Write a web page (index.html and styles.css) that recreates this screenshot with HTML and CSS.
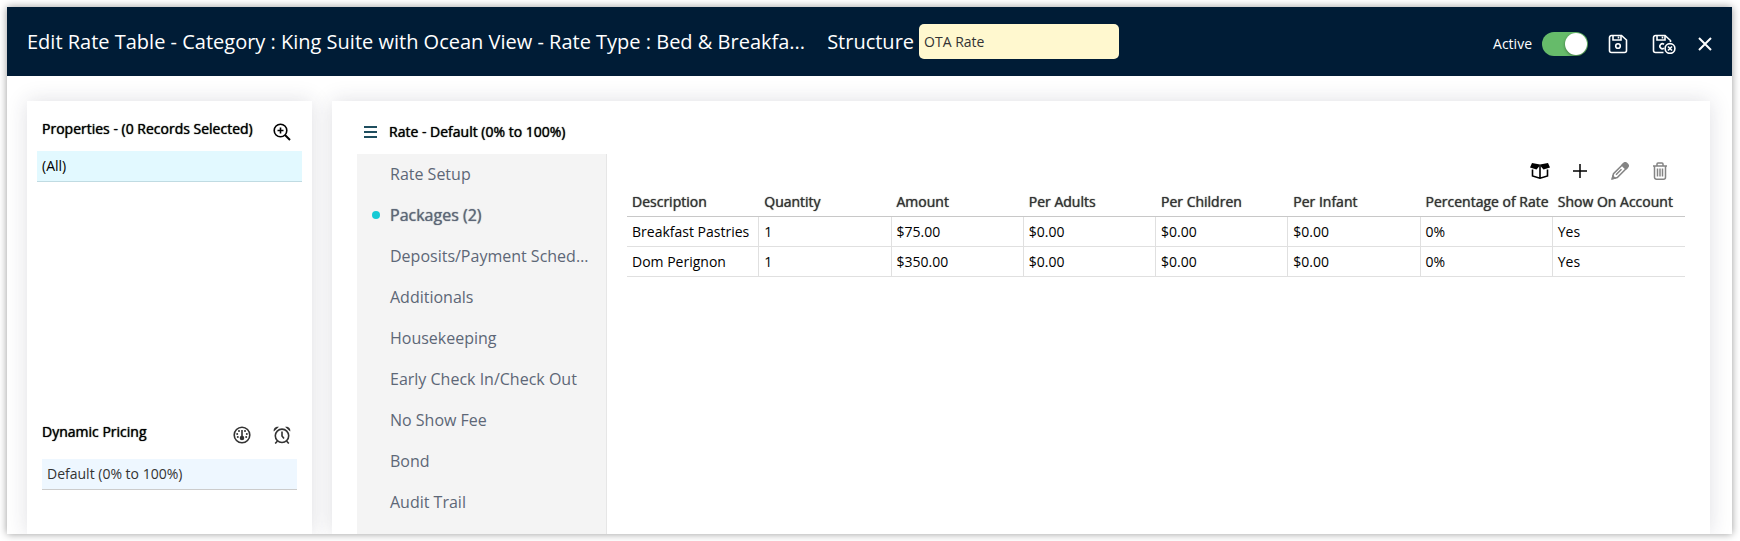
FILE: index.html
```
<!DOCTYPE html>
<html lang="en">
<head>
    <meta charset="UTF-8">
    <meta name="viewport" content="width=device-width, initial-scale=1.0">
    <title>Edit Rate Table</title>
    <link rel="stylesheet" href="styles.css">
</head>
<body>
    <div class="modal">
        <header class="modal-header">
            <h1 class="modal-title">Edit Rate Table - Category : King Suite with Ocean View - Rate Type : Bed &amp; Breakfa...</h1>
            <label class="structure-label" for="structure">Structure</label>
            <input type="text" id="structure" class="structure-input" value="OTA Rate">
            <div class="header-actions">
                <label class="active-label" for="active">Active</label>
                <input type="checkbox" id="active" class="toggle" checked>
                <button class="icon-btn save-btn" aria-label="Save">
                    <svg width="20" height="20" viewBox="0 0 20 20" fill="none" stroke="#fff" stroke-width="1.6">
                        <path d="M3.5 1.5h10l5 4.5v10.5a2 2 0 0 1-2 2h-13a2 2 0 0 1-2-2v-13a2 2 0 0 1 2-2z"/>
                        <path d="M5 1.5v4.5h8v-4.5M10.500 2.500v2"/>
                        <circle cx="10" cy="12" r="2.300"/>
                    </svg>
                </button>
                <button class="icon-btn save-close-btn" aria-label="Save and close">
                    <svg width="24" height="20" viewBox="0 0 24 20" fill="none" stroke="#fff" stroke-width="1.6">
                        <path d="M11.500 18.500h-8a2 2 0 0 1-2-2v-13a2 2 0 0 1 2-2h9.500l5.500 5v1.500"/>
                        <path d="M5 1.500v4.500h8v-4.500M10.500 2.500v2"/>
                        <path d="M12 10.300a2.500 2.500 0 1 0 0 3.800"/>
                        <circle cx="18" cy="14.500" r="4.900"/>
                        <path d="M16 12.500l4 4M20 12.500l-4 4"/>
                    </svg>
                </button>
                <button class="icon-btn close-btn" aria-label="Close">
                    <svg width="14" height="14" viewBox="0 0 14 14" stroke="#fff" stroke-width="2">
                        <path d="M1 1l12 12M13 1L1 13"/>
                    </svg>
                </button>
            </div>
        </header>

        <div class="modal-body">
            <aside class="card side-card">
                <section class="properties">
                    <div class="section-head">
                        <h2 class="heading">Properties - (0 Records Selected)</h2>
                        <button class="icon-btn" aria-label="Search properties">
                            <svg width="18" height="18" viewBox="0 0 18 18" fill="none" stroke="#000" stroke-width="1.6">
                                <circle cx="7.500" cy="7.500" r="6.300"/>
                                <path d="M12 12l5 5" stroke-width="2"/>
                                <path d="M7.500 4.500v6M4.500 7.500h6"/>
                            </svg>
                        </button>
                    </div>
                    <div class="property-row">(All)</div>
                </section>
                <section class="pricing">
                    <div class="section-head">
                        <h2 class="heading">Dynamic Pricing</h2>
                        <div class="pricing-icons">
                            <button class="icon-btn" aria-label="Occupancy pricing">
                                <svg width="18" height="18" viewBox="0 0 18 18" fill="none" stroke="#333" stroke-width="1.6">
                                    <circle cx="9" cy="9" r="7.800"/>
                                    <path d="M9 4v7"/>
                                    <circle cx="9" cy="12" r="1.500" fill="#333"/>
                                    <g fill="#333" stroke="none">
                                        <circle cx="6" cy="5" r="1"/>
                                        <circle cx="12" cy="5" r="1"/>
                                        <circle cx="4.200" cy="8" r="1"/>
                                        <circle cx="13.800" cy="8" r="1"/>
                                        <circle cx="4.800" cy="11" r="1"/>
                                        <circle cx="13.200" cy="11" r="1"/>
                                    </g>
                                </svg>
                            </button>
                            <button class="icon-btn" aria-label="Timed pricing">
                                <svg width="18" height="18" viewBox="0 0 18 18" fill="none" stroke="#333" stroke-width="1.6">
                                    <circle cx="9" cy="9.800" r="6.700"/>
                                    <path d="M9 5.500v4.500l2 2.500M4.500 15l-2.300 2.500M13.500 15l2.300 2.500"/>
                                    <path d="M.8 5.600C0 2.500 2.500 0 6 .8zM17.200 5.600C18 2.500 15.500 0 12 .8z" fill="#333" stroke="none"/>
                                </svg>
                            </button>
                        </div>
                    </div>
                    <div class="pricing-row">Default (0% to 100%)</div>
                </section>
            </aside>

            <main class="card main-card">
                <div class="rate-head">
                    <button class="icon-btn" aria-label="Toggle menu">
                        <svg width="13" height="12" viewBox="0 0 13 12" stroke="#1f4e5f" stroke-width="2">
                            <path d="M0 1h13M0 6h13M0 11h13"/>
                        </svg>
                    </button>
                    <h2 class="heading">Rate - Default (0% to 100%)</h2>
                </div>
                <div class="rate-body">
                    <nav class="rate-nav">
                        <a href="#" class="nav-item">Rate Setup</a>
                        <a href="#" class="nav-item selected">Packages (2)</a>
                        <a href="#" class="nav-item">Deposits/Payment Schedule</a>
                        <a href="#" class="nav-item">Additionals</a>
                        <a href="#" class="nav-item">Housekeeping</a>
                        <a href="#" class="nav-item">Early Check In/Check Out</a>
                        <a href="#" class="nav-item">No Show Fee</a>
                        <a href="#" class="nav-item">Bond</a>
                        <a href="#" class="nav-item">Audit Trail</a>
                    </nav>
                    <div class="packages">
                        <div class="toolbar">
                            <button class="icon-btn" aria-label="Packages">
                                <svg width="20" height="16" viewBox="0 0 20 16">
                                    <path d="M2 0L10 1.500 18 0 20 4.500 13.500 6.500 10 2.500 6.500 6.500 0 4.500z"/>
                                    <path d="M2.500 6.500v6.500l7.500 2.200 7.500-2.200V6.500M10 3v12" fill="none" stroke="#000" stroke-width="1.600"/>
                                </svg>
                            </button>
                            <button class="icon-btn" aria-label="Add">
                                <svg width="14" height="14" viewBox="0 0 14 14" stroke="#000" stroke-width="1.500">
                                    <path d="M0 7h14M7 0v14"/>
                                </svg>
                            </button>
                            <button class="icon-btn" aria-label="Edit">
                                <svg width="18" height="18" viewBox="0 0 18 18" fill="none" stroke="#848484" stroke-width="1.500">
                                    <path d="M1.300 16.700l1.200-5L12 2.200l3.800 3.800-9.500 9.500z"/>
                                    <path d="M11 3.200l1.800-1.800a2 2 0 0 1 2.800 0l1 1a2 2 0 0 1 0 2.800L14.800 7z" fill="#848484"/>
                                    <path d="M1.300 16.700l.6-2.500 1.900 1.900zM5 12.800l5.500-5.500" fill="#848484"/>
                                </svg>
                            </button>
                            <button class="icon-btn" aria-label="Delete">
                                <svg width="16" height="18" viewBox="0 0 16 18" fill="none" stroke="#848484" stroke-width="1.500">
                                    <path d="M1 4h14M5 4V2a1 1 0 0 1 1-1h4a1 1 0 0 1 1 1v2M2.500 4v11.200a2 2 0 0 0 2 2h7a2 2 0 0 0 2-2V4M5.500 6.500v8M8 6.500v8M10.500 6.500v8"/>
                                </svg>
                            </button>
                        </div>
                        <table class="package-table">
                            <thead>
                                <tr>
                                    <th>Description</th>
                                    <th>Quantity</th>
                                    <th>Amount</th>
                                    <th>Per Adults</th>
                                    <th>Per Children</th>
                                    <th>Per Infant</th>
                                    <th>Percentage of Rate</th>
                                    <th>Show On Account</th>
                                </tr>
                            </thead>
                            <tbody>
                                <tr>
                                    <td>Breakfast Pastries</td>
                                    <td>1</td>
                                    <td>$75.00</td>
                                    <td>$0.00</td>
                                    <td>$0.00</td>
                                    <td>$0.00</td>
                                    <td>0%</td>
                                    <td>Yes</td>
                                </tr>
                                <tr>
                                    <td>Dom Perignon</td>
                                    <td>1</td>
                                    <td>$350.00</td>
                                    <td>$0.00</td>
                                    <td>$0.00</td>
                                    <td>$0.00</td>
                                    <td>0%</td>
                                    <td>Yes</td>
                                </tr>
                            </tbody>
                        </table>
                    </div>
                </div>
            </main>
        </div>
    </div>
</body>
</html>
```
FILE: styles.css
```
* {
    box-sizing: border-box;
}

body {
    margin: 0;
    padding: 7px 8px 7px 7px;
    height: 100vh;
    display: flex;
    background-color: #fff;
    font-family: "Open Sans", sans-serif;
    font-size: 14px;
    line-height: 20px;
    color: #000;
}

.modal {
    flex: 1;
    min-width: 0;
    display: flex;
    flex-direction: column;
    overflow: hidden;
    background-color: #fff;
    box-shadow: 0 0 8px rgba(0, 0, 0, 0.4);
}

/* Header */
.modal-header {
    display: flex;
    align-items: center;
    flex-shrink: 0;
    height: 69px;
    padding: 0 20px;
    background-color: #001c36;
    color: #fff;
}

.modal-title {
    min-width: 0;
    margin: 0;
    font-size: 20px;
    font-weight: 400;
    line-height: 28px;
    white-space: nowrap;
    overflow: hidden;
    text-overflow: ellipsis;
}

.structure-label {
    margin-left: 22px;
    font-size: 20px;
    line-height: 28px;
}

.structure-input {
    width: 200px;
    height: 35px;
    margin-left: 5px;
    padding: 0 5px;
    border: none;
    border-radius: 5px;
    background-color: #fff8cf;
    color: #333;
    font: inherit;
}

.header-actions {
    display: flex;
    align-items: center;
    margin-left: auto;
    padding-top: 5px;
}

.active-label {
    margin-right: 10px;
}

.toggle {
    appearance: none;
    width: 46px;
    height: 24px;
    margin: 0;
    padding: 1px;
    border-radius: 12px;
    background-color: #9aa3ab;
    display: flex;
    cursor: pointer;
}

.toggle::before {
    content: "";
    width: 22px;
    height: 22px;
    border-radius: 50%;
    background-color: #fff;
    box-shadow: 0 1px 3px rgba(0, 0, 0, 0.4);
}

.toggle:checked {
    background-color: #66bb6a;
    justify-content: flex-end;
}

.icon-btn {
    display: flex;
    padding: 0;
    border: none;
    background: none;
    cursor: pointer;
}

.save-btn {
    margin-left: 20px;
}

.save-close-btn {
    margin-left: 24px;
}

.close-btn {
    margin-left: 22px;
}

/* Body */
.modal-body {
    flex: 1;
    min-height: 0;
    display: flex;
    gap: 20px;
    padding: 25px 22px 0 20px;
}

.card {
    background-color: #fff;
    box-shadow: 0 0 20px rgba(40, 40, 70, 0.15);
}

.heading {
    margin: 0;
    font-size: 14px;
    font-weight: 400;
    line-height: 20px;
    text-shadow: 0 0 1px currentColor;
}

.side-card {
    width: 285px;
    flex-shrink: 0;
    display: flex;
    flex-direction: column;
    padding: 18px 10px 0;
}

.properties {
    flex: 1;
}

.section-head {
    display: flex;
    justify-content: space-between;
    height: 21px;
    padding: 0 11px 0 5px;
}

.section-head .icon-btn {
    padding-top: 4px;
}

.property-row {
    margin-top: 11px;
    padding: 5px;
    border-bottom: 1px solid #c0dbe2;
    background-color: #e2f9ff;
}

.pricing {
    height: 112px;
}

.pricing-icons {
    display: flex;
    gap: 22px;
}

.pricing-row {
    margin: 16px 5px 0;
    padding: 5px;
    border-bottom: 1px solid #ccc;
    background-color: #eef7ff;
    color: #333;
}

.main-card {
    flex: 1;
    min-width: 0;
    display: flex;
    flex-direction: column;
    padding: 21px 25px 0;
}

.rate-head {
    display: flex;
    align-items: center;
    gap: 12px;
    padding-left: 7px;
}

.rate-body {
    flex: 1;
    display: flex;
    gap: 20px;
    margin-top: 12px;
}

.rate-nav {
    width: 250px;
    flex-shrink: 0;
    border-right: 1px solid #e6e6e6;
    background-color: #f4f4f4;
}

.nav-item {
    display: block;
    position: relative;
    padding: 0 16px 0 33px;
    font-size: 16px;
    line-height: 41px;
    color: #5d6777;
    text-decoration: none;
    white-space: nowrap;
    overflow: hidden;
    text-overflow: ellipsis;
}

.nav-item.selected {
    text-shadow: 0 0 1px currentColor;
}

.nav-item.selected::before {
    content: "";
    position: absolute;
    left: 15px;
    top: 16px;
    width: 8px;
    height: 8px;
    border-radius: 50%;
    background-color: #16cad5;
}

/* Packages grid */
.packages {
    flex: 1;
    min-width: 0;
}

.toolbar {
    display: flex;
    align-items: center;
    justify-content: flex-end;
    gap: 20px;
    height: 33px;
    padding-right: 15px;
}

.toolbar .icon-btn {
    width: 20px;
    justify-content: center;
}

.package-table {
    width: 100%;
    table-layout: fixed;
    border-collapse: separate;
    border-spacing: 0;
}

.package-table th,
.package-table td {
    height: 30px;
    padding: 0 0 0 5px;
    text-align: left;
    white-space: nowrap;
    border-bottom: 1px solid #e0e0e0;
}

.package-table th {
    font-weight: 400;
    color: #333;
    text-shadow: 0 0 1px currentColor;
    border-bottom-color: #c8c8c8;
}

.package-table td:not(:last-child) {
    border-right: 1px solid #e0e0e0;
}
```
